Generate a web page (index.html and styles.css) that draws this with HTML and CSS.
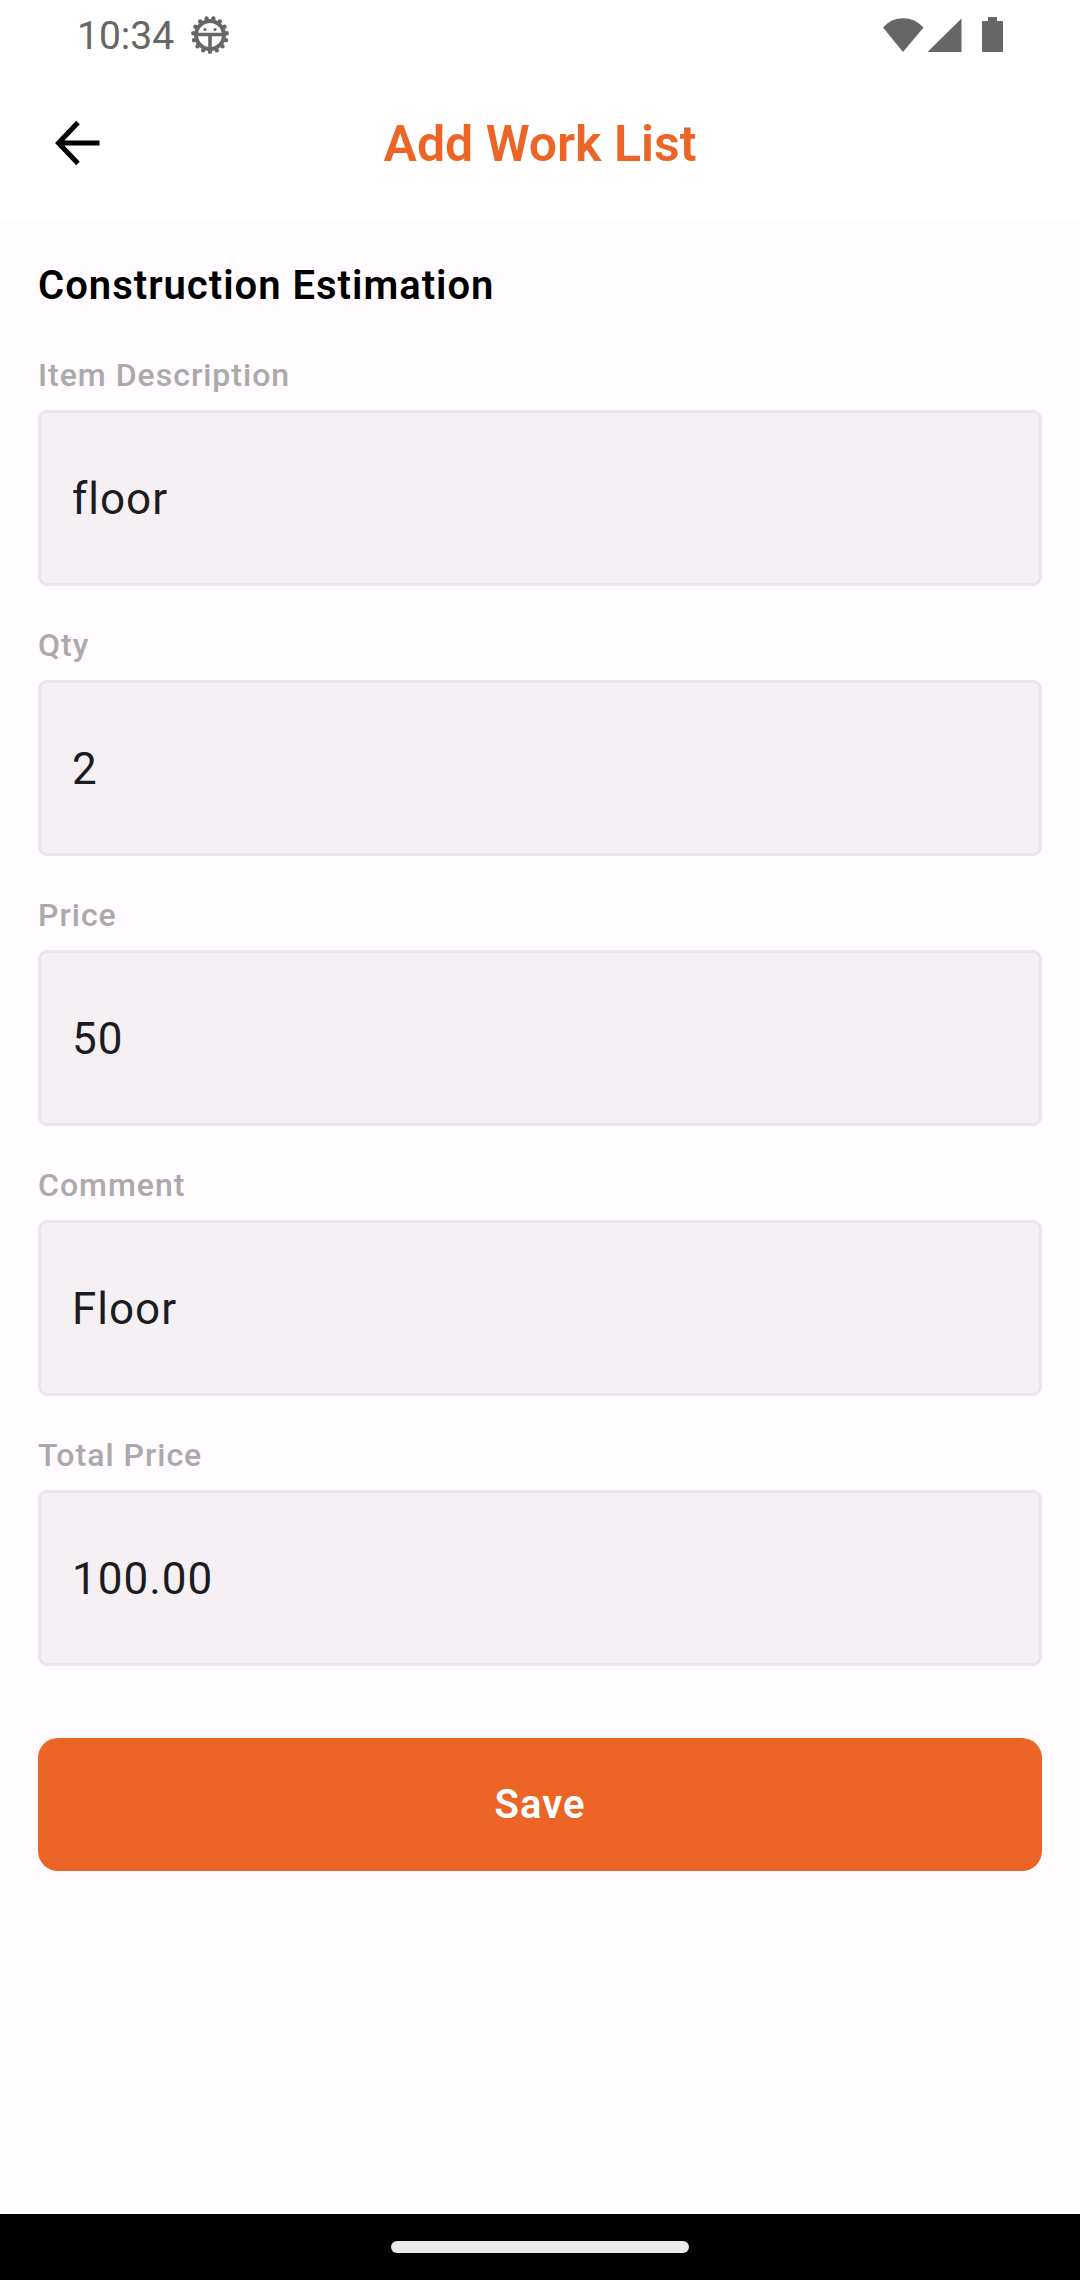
FILE: index.html
```html
<!DOCTYPE html>
<html lang="en">
<head>
<meta charset="utf-8">
<meta name="viewport" content="width=device-width, initial-scale=1">
<title>Add Work List</title>
<link rel="stylesheet" href="styles.css">
</head>
<body>
<div class="screen">
  <div class="status-bar">
    <div class="status-group">
      <span class="clock">10:34</span>
      <svg class="gear" width="40" height="40" viewBox="0 0 40 40" aria-hidden="true">
        <circle cx="20" cy="21" r="14" fill="none" stroke="currentColor" stroke-width="4"/>
        <circle cx="20" cy="21" r="16.800" fill="none" stroke="currentColor" stroke-width="4.400" stroke-linecap="round" pathLength="15" stroke-dasharray="0 1" transform="rotate(90 20 21)"/>
        <path d="M7 20.500h26M20 21v13" fill="none" stroke="currentColor" stroke-width="3.600"/>
        <circle cx="15" cy="15.400" r="1.500" fill="currentColor"/>
        <circle cx="25" cy="15.400" r="1.500" fill="currentColor"/>
      </svg>
    </div>
    <svg class="signals" width="122" height="36" viewBox="0 0 122 36" fill="currentColor" aria-hidden="true">
      <path d="M1 11.500Q9 2.300 21 2.300T41.500 11.500L21 36z"/>
      <path d="M45.500 36L79.500 2.500V36z"/>
      <path d="M106 1h9v4h5q1 0 1 1v29q0 1-1 1h-19q-1 0-1-1V6q0-1 1-1h5z"/>
    </svg>
  </div>
  <header class="app-bar">
    <button class="back" type="button" aria-label="Back">
      <svg width="46" height="46" viewBox="0 0 46 46" fill="none" stroke="#000" stroke-width="5" aria-hidden="true">
        <path d="M24 2.500L4.500 23l19.500 20.500M4.500 23h41"/>
      </svg>
    </button>
    <h1 class="title">Add Work List</h1>
  </header>
  <main class="content">
    <h2 class="section-title">Construction Estimation</h2>
    <form class="form">
      <div class="field">
        <label for="item">Item Description</label>
        <input id="item" type="text" value="floor">
      </div>
      <div class="field">
        <label for="qty">Qty</label>
        <input id="qty" type="text" inputmode="numeric" value="2">
      </div>
      <div class="field">
        <label for="price">Price</label>
        <input id="price" type="text" inputmode="decimal" value="50">
      </div>
      <div class="field">
        <label for="comment">Comment</label>
        <input id="comment" type="text" value="Floor">
      </div>
      <div class="field">
        <label for="total">Total Price</label>
        <input id="total" type="text" inputmode="decimal" value="100.00">
      </div>
      <button class="save" type="submit">Save</button>
    </form>
  </main>
  <div class="nav-bar"><div class="nav-handle"></div></div>
</div>
</body>
</html>
```
FILE: styles.css
```css
* {
  box-sizing: border-box;
}

body {
  margin: 0;
  background: #fffbff;
  color: #000;
  font-family: Roboto, "Noto Sans", sans-serif;
}

.screen {
  display: flex;
  flex-direction: column;
  min-height: 100vh;
}

.status-bar {
  display: flex;
  justify-content: space-between;
  align-items: center;
  height: 68px;
  padding: 0 76px 0 77px;
  background: #fff;
  color: #666;
}

.status-group {
  display: flex;
  align-items: center;
  gap: 16px;
}

.clock {
  padding-top: 4px;
  font-size: 39px;
  line-height: 48px;
}

.gear,
.signals {
  display: block;
}

.app-bar {
  display: grid;
  grid-template-columns: 1fr auto 1fr;
  align-items: center;
  height: 152px;
  padding: 0 54px 2px;
  background: #fff;
}

.back {
  justify-self: start;
  padding: 0;
  border: 0;
  background: none;
}

.back svg {
  display: block;
}

.title {
  margin: 0;
  padding-top: 2px;
  font-size: 50px;
  font-weight: 600;
  line-height: 60px;
  color: #ec6526;
}

.content {
  flex: 1;
  padding: 40px 38px;
}

.section-title {
  margin: 0 0 44px;
  font-size: 40px;
  font-weight: 600;
  line-height: 52px;
  letter-spacing: 1px;
}

.form {
  display: flex;
  flex-direction: column;
  gap: 40px;
}

.field {
  display: flex;
  flex-direction: column;
  gap: 16px;
}

.field label {
  font-size: 32px;
  font-weight: 500;
  line-height: 38px;
  letter-spacing: 1px;
  color: #aaa;
}

.field input {
  width: 100%;
  height: 176px;
  padding: 2px 31px 0;
  border: 3px solid #e8e6ea;
  border-radius: 9px;
  background: #f5f0f4;
  color: #1c1b1f;
  font-family: inherit;
  font-size: 44px;
  letter-spacing: 1px;
}

.save {
  height: 133px;
  margin-top: 32px;
  border: 0;
  border-radius: 20px;
  background: #ec6526;
  color: #fff;
  font-family: inherit;
  font-size: 40px;
  font-weight: 600;
  letter-spacing: 1px;
}

.nav-bar {
  display: flex;
  justify-content: center;
  align-items: center;
  height: 66px;
  background: #000;
}

.nav-handle {
  width: 298px;
  height: 12px;
  border-radius: 6px;
  background: #ebebeb;
}
```
